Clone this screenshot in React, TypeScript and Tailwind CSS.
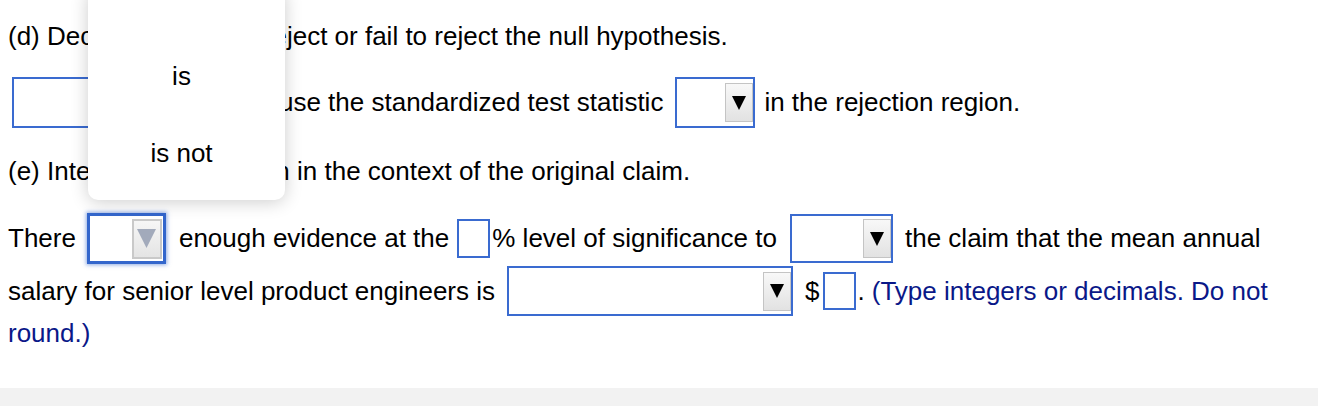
import React from "react";

function Arrow({ muted }: { muted?: boolean }) {
  if (muted) {
    return (
      <svg width="19" height="19" viewBox="0 0 19 19">
        <polygon points="0,0 19,0 9.5,19" fill="#a2aabb" />
      </svg>
    );
  }
  return (
    <svg width="14" height="14" viewBox="0 0 14 14">
      <polygon points="0,0 14,0 7,14" fill="#000" />
    </svg>
  );
}

function DropSelect({ className }: { className: string }) {
  return (
    <span
      className={`flex shrink-0 items-center justify-end border-2 border-[#3a6bd0] bg-white ${className}`}
    >
      <span className="flex h-[39px] w-[28px] items-center justify-center border border-[#c4c4c4] bg-gradient-to-b from-[#f8f8f8] to-[#e2e2e2]">
        <Arrow />
      </span>
    </span>
  );
}

function TextBox({ className }: { className: string }) {
  return <span className={`block shrink-0 border-2 border-[#3a6bd0] bg-white ${className}`} />;
}

export default function App() {
  return (
    <div className="relative flex h-[406px] w-full flex-col overflow-hidden bg-white font-['Liberation_Sans',Arial,sans-serif] text-[26px] text-black">
      <div className="pl-2 pt-4 whitespace-nowrap">
        <div className="flex h-[40px] items-center">
          <span>(d) Decide whether to reject or fail to reject the null hypothesis.</span>
        </div>

        <div className="mt-[21px] flex h-[51px] items-center">
          <DropSelect className="ml-1 h-[51px] w-[163px]" />
          <span className="ml-[11px]">
            H<sub className="text-[19px]">0</sub> because the standardized test statistic
          </span>
          <DropSelect className="ml-3 h-[51px] w-[80px]" />
          <span className="ml-[9px]">in the rejection region.</span>
        </div>

        <div className="mt-[23px] flex h-[40px] items-center">
          <span>(e) Interpret the decision in the context of the original claim.</span>
        </div>

        <div className="mt-[22px] flex h-[51px] items-center">
          <span>There</span>
          <span className="ml-[11px] flex h-[51px] w-[79px] shrink-0 items-center justify-end border-[3px] border-[#3366cc] bg-white pr-px shadow-[0_0_4px_1px_rgba(51,102,204,0.55)]">
            <span className="flex h-[40px] w-[30px] items-center justify-center border-2 border-[#c9c9c9] bg-gradient-to-b from-[#f6f6f6] to-[#e4e4e4]">
              <Arrow muted />
            </span>
          </span>
          <span className="ml-[13px]">enough evidence at the</span>
          <TextBox className="ml-2 h-[39px] w-[33px]" />
          <span className="ml-[2px]">% level of significance to</span>
          <DropSelect className="ml-[13px] h-[49px] w-[103px]" />
          <span className="ml-3">the claim that the mean annual</span>
        </div>

        <div className="mt-[2px] flex h-[50px] items-center">
          <span>salary for senior level product engineers is</span>
          <DropSelect className="ml-3 h-[50px] w-[286px]" />
          <span className="ml-3">$</span>
          <TextBox className="ml-[3px] h-[38px] w-[33px]" />
          <span className="ml-[2px]">.</span>
          <span className="ml-[7px] text-[#0a1888]">(Type integers or decimals. Do not</span>
        </div>

        <div className="flex h-[34px] items-center">
          <span className="text-[#0a1888]">round.)</span>
        </div>
      </div>

      <div className="flex-1" />
      <div className="h-[18px] bg-[#f2f2f2]" />

      <div className="absolute left-[88px] top-[-12px] flex h-[212px] w-[197px] flex-col items-center rounded-[10px] bg-white pr-[10px] pt-[68px] shadow-[0_2px_18px_rgba(0,0,0,0.2)]">
        <div className="flex h-[40px] items-center">is</div>
        <div className="mt-[37px] flex h-[40px] items-center">is not</div>
      </div>
    </div>
  );
}
